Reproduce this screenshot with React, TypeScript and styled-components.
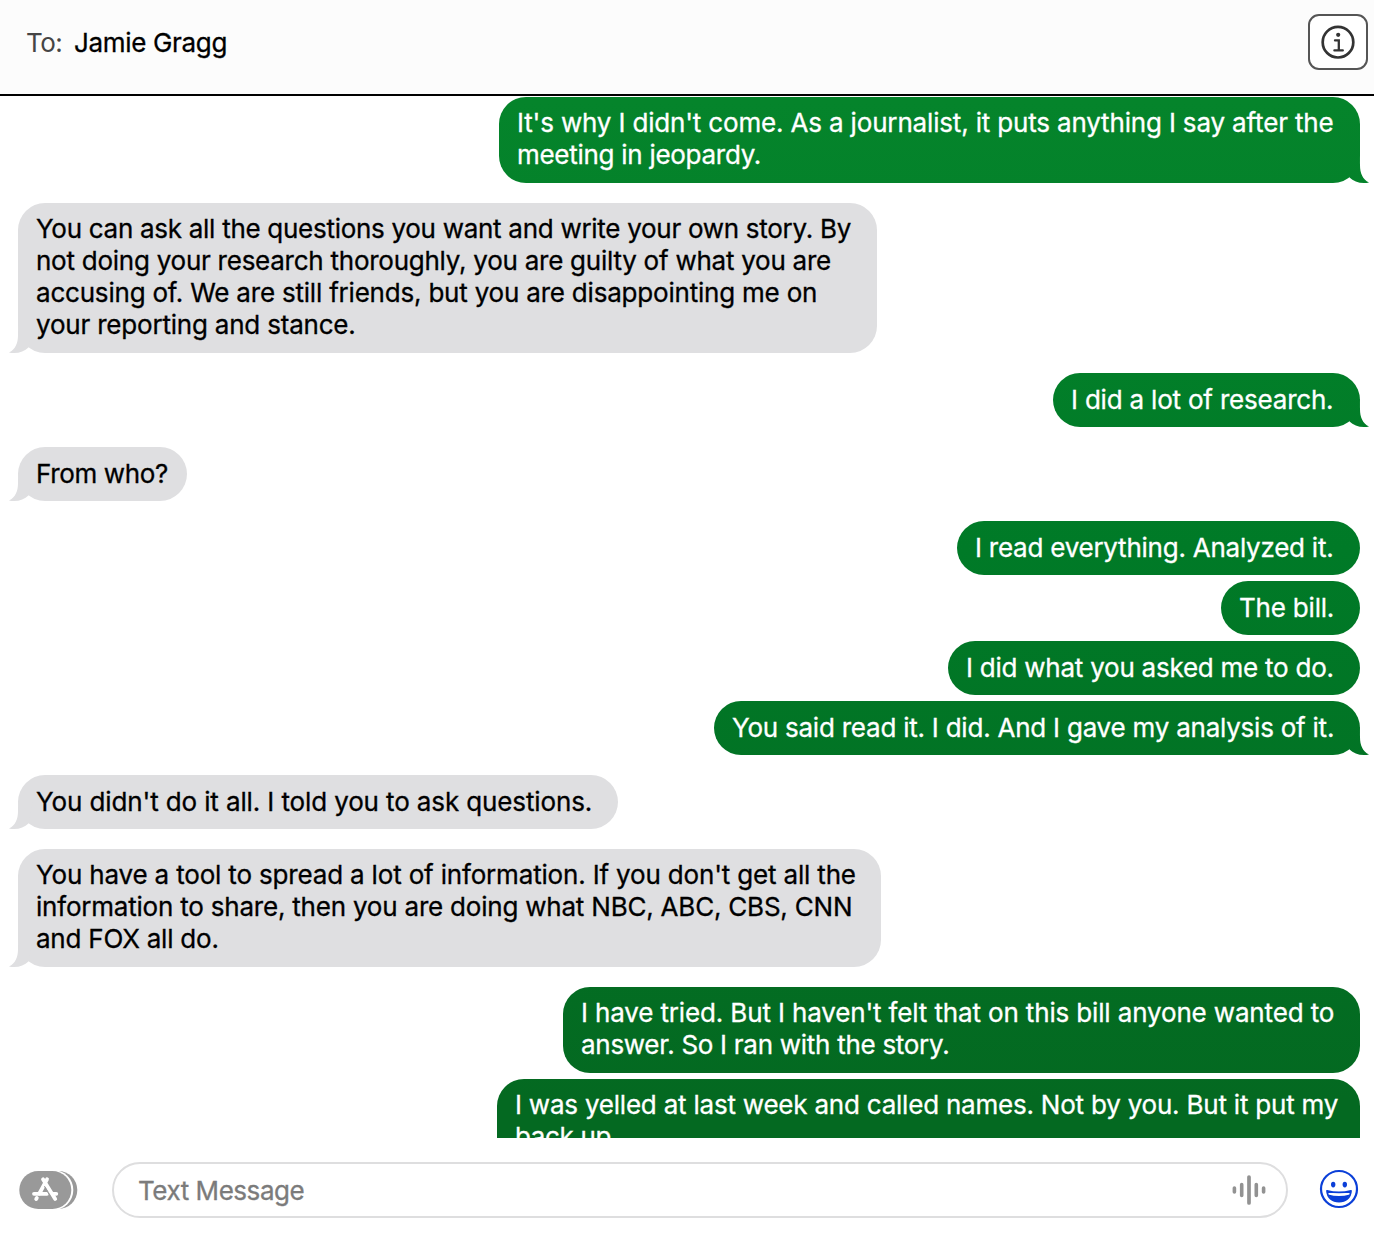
import styled, { createGlobalStyle, css } from 'styled-components'

const GlobalStyle = createGlobalStyle`
  * {
    box-sizing: border-box;
  }
  body {
    margin: 0;
    background-color: #ffffff;
    font-family: Inter, 'Liberation Sans', sans-serif;
    font-size: 26px;
    line-height: 32px;
  }
`

const Window = styled.div`
  height: 1242px;
  display: flex;
  flex-direction: column;
  overflow: hidden;
`

const Header = styled.header`
  height: 96px;
  flex: none;
  display: flex;
  justify-content: space-between;
  align-items: flex-start;
  padding: 14px 6px 0 26px;
  background-color: #fcfcfc;
  border-bottom: 2px solid #000000;
`

const Recipient = styled.div`
  display: flex;
  gap: 13px;
  padding-top: 13px;
`

const Label = styled.span`
  color: #454545;
  width: 35px;
  white-space: nowrap;
  letter-spacing: -0.6px;
`

const Name = styled.span`
  color: #000000;
  letter-spacing: -0.33px;
  -webkit-text-stroke: 0.3px;
`

const InfoButton = styled.button`
  width: 60px;
  height: 56px;
  padding: 0;
  display: flex;
  justify-content: center;
  align-items: center;
  background-color: #ffffff;
  border: 2px solid #555555;
  border-radius: 11px;
`

const Conversation = styled.main`
  height: 1042px;
  flex: none;
  display: flex;
  flex-direction: column;
  gap: 20px;
  padding: 1px 14px 0 18px;
  overflow: hidden;
`

const Group = styled.section<{ $sent?: boolean }>`
  flex: none;
  display: flex;
  flex-direction: column;
  align-items: ${(props) => (props.$sent ? 'flex-end' : 'flex-start')};
  gap: 6px;
`

const sentFill = css`
  background: linear-gradient(#058730 0, #05842b 100px, #007a27 550px, #046921 1100px) fixed;
`

const Bubble = styled.div<{ $sent?: boolean; $single?: boolean; $width: number; $tail?: boolean }>`
  position: relative;
  flex: none;
  width: ${(props) => props.$width}px;
  padding: ${(props) => (props.$single ? '11px 0 11px 18px' : '10px 0 12px 18px')};
  border-radius: 27px;
  color: ${(props) => (props.$sent ? '#ffffff' : '#000000')};
  background-color: #dfdfe1;
  ${(props) => props.$sent && sentFill}

  &::after {
    content: '';
    display: ${(props) => (props.$tail ? 'block' : 'none')};
    position: absolute;
    bottom: 0;
    width: 30px;
    height: 28px;
    background-color: #dfdfe1;
    ${(props) =>
      props.$sent
        ? css`
            right: -10px;
            ${sentFill}
            clip-path: path('M19.6 0C20 4 20 7 20 10C20 18 22.5 24.5 29 27.4C27.5 28 26 28 24 28C18 28 13 26 9.5 22.5L5 0Z');
          `
        : css`
            left: -10px;
            clip-path: path('M10.4 0C10 4 10 7 10 10C10 18 7.5 24.5 1 27.4C2.5 28 4 28 6 28C12 28 17 26 20.5 22.5L25 0Z');
          `}
  }
`

const Line = styled.div<{ $tracking?: number }>`
  position: relative;
  z-index: 1;
  width: max-content;
  white-space: nowrap;
  letter-spacing: ${(props) => props.$tracking ?? 0}px;
  -webkit-text-stroke: 0.3px;
`

const Composer = styled.footer`
  height: 104px;
  flex: none;
  display: flex;
  align-items: center;
  padding: 0 15px 0 19px;
`

const AppsButton = styled.button`
  width: 60px;
  height: 40px;
  margin: 0 33px 1px 0;
  padding: 0;
  border: 0;
  background: none;
`

const Field = styled.div`
  width: 1176px;
  height: 56px;
  display: flex;
  justify-content: space-between;
  align-items: center;
  padding: 0 20px 0 24px;
  border: 2px solid #dededf;
  border-radius: 28px;
`

const Placeholder = styled.span`
  padding-top: 2px;
  color: #7b7b7b;
  letter-spacing: -0.45px;
  -webkit-text-stroke: 0.3px;
`

const EmojiButton = styled.button`
  width: 40px;
  height: 40px;
  margin: 0 0 2px 31px;
  padding: 0;
  border: 0;
  background: none;
`

const Icon = styled.svg`
  display: block;
`

interface LineInterface {
  text: string
  tracking: number
}

interface MessageInterface {
  width: number
  tail?: boolean
  lines: LineInterface[]
}

interface GroupInterface {
  sent?: boolean
  messages: MessageInterface[]
}

const groups: GroupInterface[] = [
  {
    sent: true,
    messages: [
      {
        width: 861,
        tail: true,
        lines: [
          {
            text: "It's why I didn't come. As a journalist, it puts anything I say after the",
            tracking: -0.165,
          },
          { text: 'meeting in jeopardy.', tracking: -0.28 },
        ],
      },
    ],
  },
  {
    messages: [
      {
        width: 859,
        tail: true,
        lines: [
          {
            text: 'You can ask all the questions you want and write your own story. By',
            tracking: -0.285,
          },
          {
            text: 'not doing your research thoroughly, you are guilty of what you are',
            tracking: -0.25,
          },
          {
            text: 'accusing of. We are still friends, but you are disappointing me on',
            tracking: -0.205,
          },
          { text: 'your reporting and stance.', tracking: -0.2 },
        ],
      },
    ],
  },
  {
    sent: true,
    messages: [
      { width: 307, tail: true, lines: [{ text: 'I did a lot of research.', tracking: -0.2 }] },
    ],
  },
  {
    messages: [{ width: 169, tail: true, lines: [{ text: 'From who?', tracking: -0.35 }] }],
  },
  {
    sent: true,
    messages: [
      { width: 403, lines: [{ text: 'I read everything. Analyzed it.', tracking: -0.24 }] },
      { width: 139, lines: [{ text: 'The bill.', tracking: -0.2 }] },
      { width: 412, lines: [{ text: 'I did what you asked me to do.', tracking: -0.24 }] },
      {
        width: 646,
        tail: true,
        lines: [
          { text: 'You said read it. I did. And I gave my analysis of it.', tracking: -0.23 },
        ],
      },
    ],
  },
  {
    messages: [
      {
        width: 600,
        tail: true,
        lines: [{ text: "You didn't do it all. I told you to ask questions.", tracking: -0.12 }],
      },
    ],
  },
  {
    messages: [
      {
        width: 863,
        tail: true,
        lines: [
          {
            text: "You have a tool to spread a lot of information. If you don't get all the",
            tracking: -0.17,
          },
          {
            text: 'information to share, then you are doing what NBC, ABC, CBS, CNN',
            tracking: -0.21,
          },
          { text: 'and FOX all do.', tracking: -0.23 },
        ],
      },
    ],
  },
  {
    sent: true,
    messages: [
      {
        width: 797,
        lines: [
          {
            text: "I have tried. But I haven't felt that on this bill anyone wanted to",
            tracking: -0.145,
          },
          { text: 'answer. So I ran with the story.', tracking: -0.28 },
        ],
      },
      {
        width: 863,
        lines: [
          {
            text: 'I was yelled at last week and called names. Not by you. But it put my',
            tracking: -0.215,
          },
          { text: 'back up.', tracking: -0.35 },
        ],
      },
    ],
  },
]

const InfoIcon = () => (
  <Icon width="34" height="34" viewBox="0 0 34 34" fill="none" stroke="#333333">
    <circle cx="17" cy="17.2" r="15.3" strokeWidth="2.7" />
    <circle cx="17.2" cy="9.8" r="2.1" fill="#333333" stroke="none" />
    <path d="M14 15.4H17.8V25M13.4 25.4H21.8" strokeWidth="2.3" strokeLinecap="round" />
  </Icon>
)

const AppsIcon = () => (
  <Icon width="60" height="40" viewBox="0 0 60 40" fill="none">
    <rect x="6" y="1" width="52.3" height="38" rx="19" fill="#999999" />
    <rect x="2" y="0" width="52.3" height="40" rx="20" fill="#ffffff" />
    <rect x="0.3" y="1" width="52" height="38" rx="19" fill="#999999" />
    <g stroke="#ffffff" strokeWidth="3.8" strokeLinecap="round">
      <path d="M28 9.3L20.4 23.5M24 9.3L36.2 29" />
      <path d="M15 23.8H28M34 23.8H37.3" />
      <path d="M17.8 28L17.2 29" />
    </g>
    <path d="M25.4 16.2L31.2 26.4" stroke="#999999" strokeWidth="1" />
  </Icon>
)

const VoiceIcon = () => (
  <Icon width="34" height="30" viewBox="0 0 34 30" stroke="#929292" strokeLinecap="round">
    <path d="M2.4 13V17M31.6 13V17" strokeWidth="3.6" />
    <path d="M9.7 9.5V20.5M24.3 9.5V20.5" strokeWidth="3.6" />
    <path d="M17 2V28" strokeWidth="3.7" />
  </Icon>
)

const EmojiIcon = () => (
  <Icon width="40" height="40" viewBox="0 0 40 40" fill="none">
    <circle cx="20" cy="20" r="18" stroke="#0b3fd8" strokeWidth="2.2" />
    <ellipse cx="14.2" cy="15.6" rx="2.2" ry="2.8" fill="#0b3fd8" />
    <ellipse cx="25.8" cy="15.6" rx="2.2" ry="2.8" fill="#0b3fd8" />
    <path
      d="M8 21.8C15 23.6 25 23.6 32 21.8C31.6 28.8 26.7 32.6 20 32.6C13.3 32.6 8.4 28.8 8 21.8Z"
      stroke="#0b3fd8"
      strokeWidth="1.8"
      strokeLinejoin="round"
    />
    <path
      d="M9.3 25.6C16.5 27.6 23.5 27.6 30.7 25.6C28.7 30.8 24.4 33 20 33C15.6 33 11.3 30.8 9.3 25.6Z"
      fill="#0b3fd8"
    />
  </Icon>
)

const App = () => {
  return (
    <Window>
      <GlobalStyle />
      <Header>
        <Recipient>
          <Label>To:</Label>
          <Name>Jamie Gragg</Name>
        </Recipient>
        <InfoButton aria-label="Details">
          <InfoIcon />
        </InfoButton>
      </Header>
      <Conversation>
        {groups.map((group, index) => (
          <Group key={index} $sent={group.sent}>
            {group.messages.map((message) => (
              <Bubble
                key={message.lines[0].text}
                $sent={group.sent}
                $single={message.lines.length === 1}
                $width={message.width}
                $tail={message.tail}
              >
                {message.lines.map((line) => (
                  <Line key={line.text} $tracking={line.tracking}>
                    {line.text}
                  </Line>
                ))}
              </Bubble>
            ))}
          </Group>
        ))}
      </Conversation>
      <Composer>
        <AppsButton aria-label="Apps">
          <AppsIcon />
        </AppsButton>
        <Field>
          <Placeholder>Text Message</Placeholder>
          <VoiceIcon />
        </Field>
        <EmojiButton aria-label="Emoji">
          <EmojiIcon />
        </EmojiButton>
      </Composer>
    </Window>
  )
}

export default App
